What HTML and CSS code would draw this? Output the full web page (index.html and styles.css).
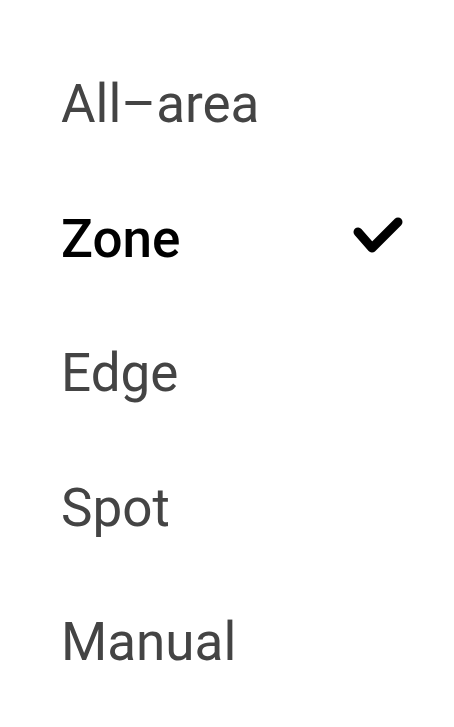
FILE: index.html
```html
<!DOCTYPE html>
<html>
<head>
<meta charset="utf-8">
<link rel="stylesheet" href="styles.css">
</head>
<body>
<ul class="menu">
  <li class="item">All–area</li>
  <li class="item selected"><span>Zone</span>
    <svg class="check" width="52" height="40" viewBox="0 0 52 40"><path d="M6 15 L20 31 L46 5" fill="none" stroke="#000" stroke-width="9" stroke-linecap="round" stroke-linejoin="round"/></svg>
  </li>
  <li class="item">Edge</li>
  <li class="item">Spot</li>
  <li class="item">Manual</li>
</ul>
</body>
</html>
```
FILE: styles.css
```css
html, body {
  margin: 0;
  padding: 0;
  background: #fff;
}
.menu {
  list-style: none;
  margin: 0;
  padding: 37px 50px 0 61px;
  font-family: Roboto, "Noto Sans", sans-serif;
}
.item {
  height: 134.5px;
  display: flex;
  align-items: center;
  justify-content: space-between;
  font-size: 53px;
  color: #444;
}
.item.selected {
  color: #000;
  font-weight: 500;
}
.check {
  display: block;
  margin-top: -4px;
}
```
